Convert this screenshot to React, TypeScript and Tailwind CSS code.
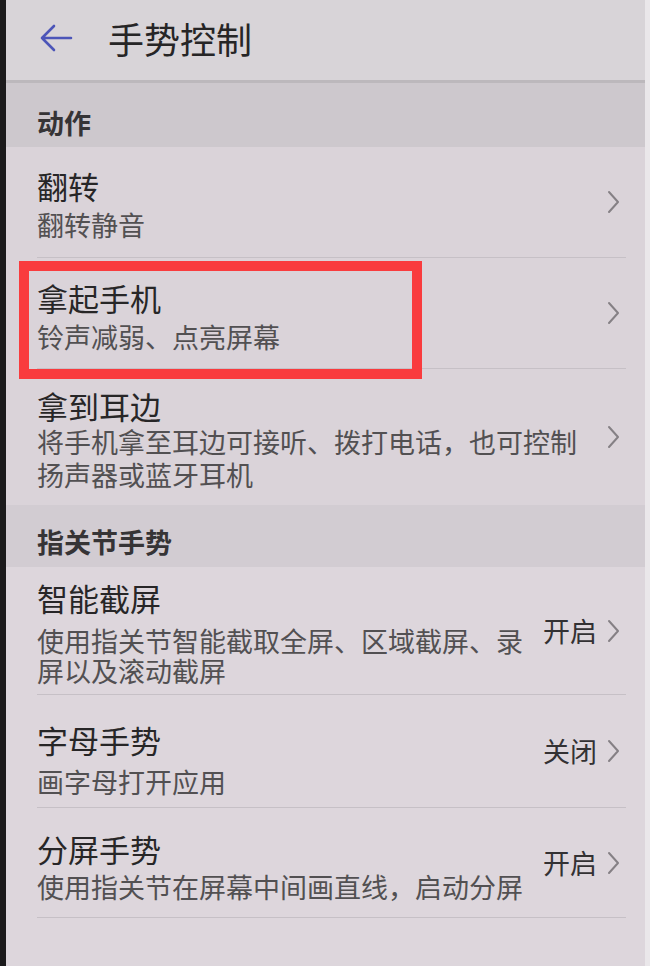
import React from "react";

const font = { fontFamily: '"Noto Sans CJK SC", "Noto Sans", sans-serif' };

type Row = {
  title: string;
  sub: string;
  value?: string;
  box: string; // row height + divider
  pt: string; // top padding of the text column
  mt: string; // gap between title and subtitle
  lh: string; // subtitle line height
};

const actionRows: Row[] = [
  { title: "翻转", sub: "翻转静音", box: "h-[111px] border-b border-[#c6c0c6]", pt: "pt-[22px]", mt: "mt-[6px]", lh: "leading-[32px]" },
  { title: "拿起手机", sub: "铃声减弱、点亮屏幕", box: "h-[111px] border-b border-[#c6c0c6]", pt: "pt-[23px]", mt: "mt-[6px]", lh: "leading-[32px]" },
  { title: "拿到耳边", sub: "将手机拿至耳边可接听、拨打电话，也可控制扬声器或蓝牙耳机", box: "h-[136px]", pt: "pt-[20px]", mt: "mt-[2px]", lh: "leading-[33px]" },
];

const knuckleRows: Row[] = [
  { title: "智能截屏", sub: "使用指关节智能截取全屏、区域截屏、录屏以及滚动截屏", value: "开启", box: "h-[128px] border-b border-[#c6c0c6]", pt: "pt-[14px]", mt: "mt-[11px]", lh: "leading-[30px]" },
  { title: "字母手势", sub: "画字母打开应用", value: "关闭", box: "h-[113px] border-b border-[#c6c0c6]", pt: "pt-[28px]", mt: "mt-[9px]", lh: "leading-[32px]" },
  { title: "分屏手势", sub: "使用指关节在屏幕中间画直线，启动分屏", value: "开启", box: "h-[110px] border-b border-[#c6c0c6]", pt: "pt-[24px]", mt: "mt-[5px]", lh: "leading-[32px]" },
];

function Chevron() {
  return (
    <svg width="13" height="24" viewBox="0 0 13 24" fill="none" className="shrink-0">
      <polyline points="2,2 11,12 2,22" stroke="#858085" strokeWidth="2" strokeLinecap="round" strokeLinejoin="round" />
    </svg>
  );
}

function SettingRow({ row }: { row: Row }) {
  return (
    <div className={`ml-[31px] mr-[19px] flex items-center gap-[10px] ${row.box}`}>
      <div className={`flex-1 self-start ${row.pt}`}>
        <div className="text-[31px] leading-[34px] text-[#272627]">{row.title}</div>
        <div className={`${row.mt} ${row.lh} text-[27px] text-[#525052]`}>{row.sub}</div>
      </div>
      <div className="flex items-center gap-[10px] pr-[6px]">
        {row.value && <span className="text-[27px] leading-[32px] text-[#333133]">{row.value}</span>}
        <Chevron />
      </div>
    </div>
  );
}

export default function App() {
  return (
    <div className="relative flex h-[966px] w-[650px] overflow-hidden bg-[#dcd5db]" style={font}>
      {/* phone edge */}
      <div className="w-[6px] shrink-0 bg-[#1b1a1b]" />

      <div className="flex flex-1 flex-col">
        {/* Header */}
        <div className="flex h-[83px] items-center border-b-[3px] border-[#bcb8bc] bg-[#d8d4d8] pb-[4px]">
          <svg width="34" height="28" viewBox="0 0 34 28" fill="none" className="ml-[33px]">
            <path d="M32 14H3M15 2L3 14l12 12" stroke="#4c55b8" strokeWidth="2.6" strokeLinecap="round" strokeLinejoin="round" />
          </svg>
          <span className="ml-[35px] text-[36px] leading-[44px] text-[#262526]">手势控制</span>
        </div>

        {/* 动作 */}
        <div className="h-[64px] bg-[#cdc8cd] pl-[31px] pt-[24px]">
          <span className="text-[27px] font-bold leading-[32px] text-[#363436]">动作</span>
        </div>
        <div className="bg-[#dad3d9]">
          {actionRows.map((r) => (
            <SettingRow key={r.title} row={r} />
          ))}
        </div>

        {/* 指关节手势 */}
        <div className="h-[62px] bg-[#d2ccd2] pl-[31px] pt-[21px]">
          <span className="text-[27px] font-bold leading-[32px] text-[#363436]">指关节手势</span>
        </div>
        <div className="flex-1 bg-[#ddd6dc]">
          {knuckleRows.map((r) => (
            <SettingRow key={r.title} row={r} />
          ))}
        </div>
      </div>

      {/* screen edge highlight */}
      <div className="w-[5px] shrink-0 bg-[#eae7ea]" />

      {/* red annotation box */}
      <div className="absolute left-[19px] top-[261px] h-[118px] w-[403px] border-[10px] border-[#f93b3e]" />
    </div>
  );
}
